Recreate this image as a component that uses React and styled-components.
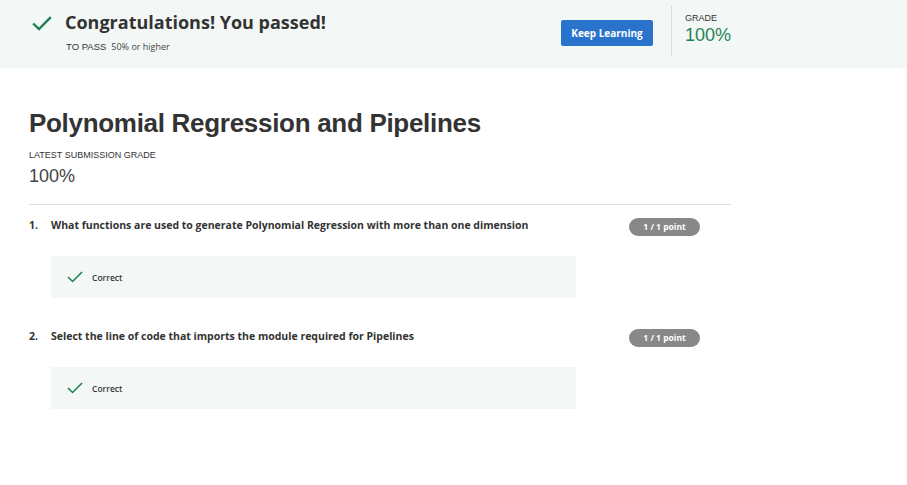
import React from 'react';
import styled, { createGlobalStyle } from 'styled-components';

const GlobalStyle = createGlobalStyle`
  body {
    margin: 0;
    background: #fff;
    font-family: "Open Sans", sans-serif;
    color: #333;
  }
`;

const questions = [
  { num: '1.', text: 'What functions are used to generate Polynomial Regression with more than one dimension' },
  { num: '2.', text: 'Select the line of code that imports the module required for Pipelines' },
];

const CheckIcon = ({ width = 20, height = 16, stroke = 2.4 }) => (
  <svg width={width} height={height} viewBox="0 0 20 16" fill="none" preserveAspectRatio="none">
    <path d="M1.2 8 L7 14 L18.8 1.2" stroke="#1f8354" strokeWidth={stroke} strokeLinecap="butt" strokeLinejoin="miter" />
  </svg>
);

export default function App() {
  return (
    <>
      <GlobalStyle />
      <Banner>
        <BannerLeft>
          <BannerIcon><CheckIcon width={20} height={15} stroke={2.4} /></BannerIcon>
          <div>
            <Congrats>Congratulations! You passed!</Congrats>
            <PassLine>
              <PassLabel>TO PASS</PassLabel>
              <PassValue>50% or higher</PassValue>
            </PassLine>
          </div>
        </BannerLeft>
        <KeepButton>Keep Learning</KeepButton>
        <GradeBlock>
          <SmallCaps>GRADE</SmallCaps>
          <GradeValue>100%</GradeValue>
        </GradeBlock>
      </Banner>
      <Main>
        <Title>Polynomial Regression and Pipelines</Title>
        <SubLabel>LATEST SUBMISSION GRADE</SubLabel>
        <LatestGrade>100%</LatestGrade>
        <Rule />
        {questions.map((q) => (
          <Question key={q.num}>
            <QuestionRow>
              <QNum>{q.num}</QNum>
              <QText>{q.text}</QText>
              <Points>1 / 1 point</Points>
            </QuestionRow>
            <Feedback>
              <CheckIcon width={16} height={12} stroke={2} />
              <FeedbackText>Correct</FeedbackText>
            </Feedback>
          </Question>
        ))}
      </Main>
    </>
  );
}

const Banner = styled.header`
  height: 68px;
  background: #f3f8f6;
  display: flex;
  align-items: flex-start;
  padding-left: 32px;
  box-sizing: border-box;
`;

const BannerLeft = styled.div`
  display: flex;
  align-items: flex-start;
  width: 529px;
  padding-top: 10px;
`;

const BannerIcon = styled.div`
  width: 33px;
  padding-top: 6px;
  display: flex;
`;

const Congrats = styled.div`
  font-family: "Open Sans", sans-serif;
  font-weight: 700;
  font-size: 18px;
  line-height: 24px;
  color: #333;
`;

const PassLine = styled.div`
  display: flex;
  align-items: baseline;
  gap: 5px;
  margin-top: 7px;
  line-height: 12px;
  padding-left: 1px;
`;

const PassLabel = styled.span`
  font-family: "Liberation Sans", Arial, sans-serif;
  font-size: 9.5px;
  color: #333;
`;

const PassValue = styled.span`
  font-family: "Open Sans", sans-serif;
  font-size: 9px;
  color: #444;
`;

const KeepButton = styled.button`
  width: 92px;
  height: 26px;
  border: none;
  border-radius: 2px;
  background: #2a73cc;
  color: #fff;
  font-family: "Open Sans", sans-serif;
  font-weight: 700;
  font-size: 10px;
  padding: 0;
  margin-top: 20px;
`;

const GradeBlock = styled.div`
  margin: 6px 0 0 18px;
  height: 50px;
  border-left: 1px solid #dcdcdc;
  padding: 7px 0 0 13px;
  box-sizing: border-box;
`;

const SmallCaps = styled.div`
  font-family: "Liberation Sans", Arial, sans-serif;
  font-size: 9px;
  line-height: 11px;
  color: #333;
`;

const GradeValue = styled.div`
  font-family: "Liberation Sans", Arial, sans-serif;
  font-size: 18px;
  color: #1f8354;
  line-height: 20px;
  margin-top: 1px;
`;

const Main = styled.main`
  width: 702px;
  padding: 40px 0 0 29px;
`;

const Title = styled.h1`
  font-family: "Liberation Sans", Arial, sans-serif;
  font-weight: 700;
  font-size: 26px;
  letter-spacing: -0.3px;
  line-height: 30px;
  margin: 0;
  color: #333;
`;

const SubLabel = styled.div`
  font-family: "Liberation Sans", Arial, sans-serif;
  font-size: 9px;
  line-height: 11px;
  color: #333;
  margin-top: 12px;
`;

const LatestGrade = styled.div`
  font-family: "Liberation Sans", Arial, sans-serif;
  font-size: 18px;
  color: #444;
  margin-top: 4px;
  line-height: 22px;
`;

const Rule = styled.hr`
  border: none;
  border-top: 1px solid #dedede;
  margin: 17px 0 0;
`;

const Question = styled.section`
  padding-top: 10px;
  margin-bottom: 18px;
`;

const QuestionRow = styled.div`
  display: flex;
  align-items: flex-start;
  height: 20px;
  line-height: 20px;
`;

const QNum = styled.span`
  width: 22px;
  font-weight: 700;
  font-size: 10.5px;
  color: #333;
`;

const QText = styled.span`
  flex: 1;
  font-weight: 700;
  font-size: 10.5px;
  color: #333;
`;

const Points = styled.span`
  width: 71px;
  height: 18px;
  margin: 3px 31px 0 0;
  border-radius: 9px;
  background: #888;
  color: #fff;
  font-weight: 700;
  font-size: 8.5px;
  line-height: 18px;
  text-align: center;
`;

const Feedback = styled.div`
  margin: 21px 0 0 22px;
  width: 525px;
  height: 42px;
  background: #f3f8f6;
  display: flex;
  align-items: center;
  padding-left: 16px;
  box-sizing: border-box;
  gap: 9px;
`;

const FeedbackText = styled.span`
  font-weight: 600;
  font-size: 8.5px;
  color: #333;
`;
